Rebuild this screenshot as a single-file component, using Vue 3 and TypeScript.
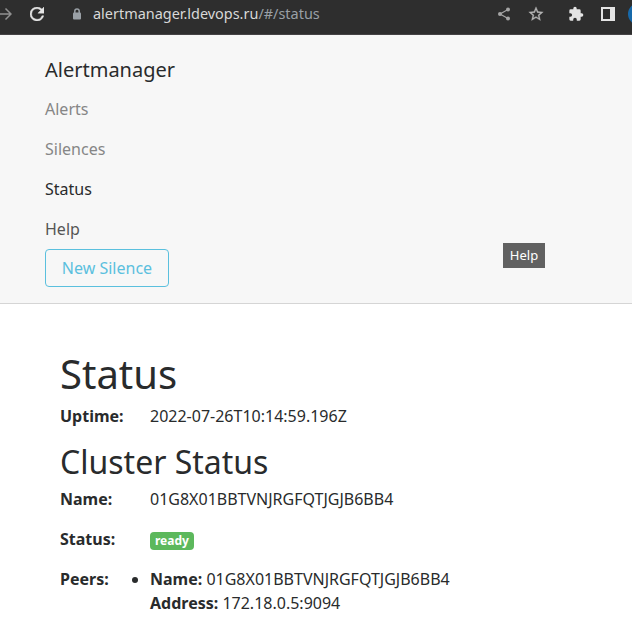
<script setup lang="ts">
interface NavItem { label: string; tone: string }
const nav: NavItem[] = [
  { label: 'Alerts', tone: 'muted' },
  { label: 'Silences', tone: 'muted' },
  { label: 'Status', tone: 'active' },
  { label: 'Help', tone: 'hover' },
]
</script>

<template>
  <div class="window">
    <header class="toolbar">
      <svg class="ico fwd" width="12" height="14" viewBox="0 0 12 14"><path d="M0 7H11M5.500 1.500L11 7l-5.500 5.500" /></svg>
      <svg class="ico reload" width="14" height="14" viewBox="4 4 16 16"><path class="solid" d="M17.650 6.350A7.960 7.960 0 0 0 12 4a8 8 0 1 0 7.730 10h-2.080A6 6 0 1 1 12 6c1.660 0 3.140.69 4.220 1.780L13 11h7V4l-2.350 2.350z" /></svg>
      <svg class="ico lock" width="10" height="12" viewBox="0 0 10 12"><path d="M2.800 5V3.200a2.200 2.200 0 0 1 4.400 0V5" /><rect class="solid" x="1" y="4.500" width="8" height="7" rx="1" /></svg>
      <span class="url">alertmanager.ldevops.ru<span class="path">/#/status</span></span>
      <svg class="ico share" width="14" height="14" viewBox="0 0 14 14"><path d="M11 2.500L3 7l8 4.500" /><circle class="solid" cx="11" cy="2.500" r="2" /><circle class="solid" cx="3" cy="7" r="2" /><circle class="solid" cx="11" cy="11.500" r="2" /></svg>
      <svg class="ico star" width="16" height="16" viewBox="1 1 22 22"><path class="solid" d="M22 9.240l-7.190-.62L12 2 9.190 8.630 2 9.240l5.460 4.730L5.820 21 12 17.270 18.180 21l-1.630-7.030L22 9.240zM12 15.400l-3.760 2.270 1-4.280-3.320-2.880 4.380-.38L12 6.100l1.710 4.040 4.380.38-3.320 2.880 1 4.280L12 15.400z" /></svg>
      <svg class="ico puzzle" width="16" height="16" viewBox="0 0 24 24"><path class="solid" d="M20.500 11H19V7a2 2 0 0 0-2-2h-4V3.500a2.500 2.500 0 0 0-5 0V5H4a2 2 0 0 0-2 2v3.800h1.500a2.700 2.700 0 0 1 0 5.400H2V20a2 2 0 0 0 2 2h3.800v-1.500a2.700 2.700 0 0 1 5.400 0V22H17a2 2 0 0 0 2-2v-4h1.500a2.500 2.500 0 0 0 0-5z" /></svg>
      <svg class="ico panel" width="14" height="14" viewBox="0 0 14 14"><rect x="1" y="1" width="12" height="12" /><rect class="solid" x="9" y="1" width="4" height="12" /></svg>
      <span class="avatar"></span>
    </header>
    <nav class="navbar">
      <div class="brand">Alertmanager</div>
      <a v-for="n in nav" :key="n.label" class="link" :class="n.tone">{{ n.label }}</a>
      <button class="silence">New Silence</button>
      <div class="tooltip">Help</div>
    </nav>
    <main class="content">
      <h1>Status</h1>
      <div class="row"><b>Uptime:</b><span>2022-07-26T10:14:59.196Z</span></div>
      <h2>Cluster Status</h2>
      <div class="row spaced"><b>Name:</b><span>01G8X01BBTVNJRGFQTJGJB6BB4</span></div>
      <div class="row spaced"><b>Status:</b><span><span class="badge">ready</span></span></div>
      <div class="row"><b>Peers:</b>
        <ul><li><div><b>Name:</b> 01G8X01BBTVNJRGFQTJGJB6BB4</div><div><b>Address:</b> 172.18.0.5:9094</div></li></ul>
      </div>
    </main>
  </div>
</template>

<style>
body { margin: 0; background: #fff; overflow: hidden; }
</style>
<style scoped>
* { box-sizing: border-box; }
.window { height: 638px; overflow: hidden; font: 16px/24px "Noto Sans", sans-serif; color: #292b2c; }
.toolbar { height: 35px; background: #2e2e2e; display: flex; align-items: center; padding-bottom: 6px; overflow: hidden; border-bottom: 1px solid #454345; }
.ico { flex: none; fill: none; stroke: #e4e4e4; stroke-width: 1.5; }
.ico .solid { fill: #e4e4e4; stroke: none; }
.fwd { stroke: #909090; }
.reload { margin-left: 18px; }
.reload .solid { stroke: #e4e4e4; stroke-width: 0.5; }
.lock { margin-left: 28px; stroke: #9aa0a6; }
.lock .solid { fill: #9aa0a6; }
.url { flex: none; margin-left: 11px; width: 404px; font-size: 14.450px; color: #d8d8d8; white-space: nowrap; }
.path { color: #9aa0a6; }
.share { stroke: #a5a5a5; stroke-width: 1.2; }
.share .solid { fill: #a5a5a5; }
.star { margin-left: 17px; }
.star .solid { fill: #b5b5b5; stroke: #b5b5b5; stroke-width: 0.4; }
.puzzle { margin-left: 24px; }
.panel { margin-left: 17px; stroke-width: 2; }
.avatar { flex: none; width: 22px; height: 22px; border-radius: 50%; background: #1769aa; margin-left: 13px; }
.navbar { position: relative; height: 269px; background: #f7f7f7; border-bottom: 1px solid #d5d5d5; padding: 20px 45px 0; }
.brand { font-size: 20px; line-height: 30px; margin-bottom: 4px; }
.link { display: block; height: 40px; padding: 8px 0; }
.muted { color: #868686; }
.hover { color: #555; }
.silence { display: block; width: 124px; height: 38px; padding: 0; border: 1px solid #5bc0de; border-radius: 4px; background: transparent; color: #5bc0de; font: inherit; }
.tooltip { position: absolute; left: 503px; top: 208px; width: 42px; height: 25px; background: #616161; color: #fff; font-size: 13px; line-height: 25px; text-align: center; }
.content { padding: 48px 60px 0; }
h1, h2 { font-weight: 400; margin: 0; }
h1 { font-size: 40px; line-height: 44px; margin-bottom: 8px; }
h2 { font-size: 32px; line-height: 35px; margin: 16px 0 8px; }
.row { display: flex; }
.row > b { width: 90px; flex: none; }
.spaced { margin-bottom: 16px; }
b { font-weight: 700; }
ul { margin: 0; padding: 0; }
.badge { display: inline-block; padding: 3px 5px; border-radius: 4px; background: #5cb85c; color: #fff; font-size: 12px; line-height: 12px; font-weight: 700; vertical-align: baseline; }
</style>
